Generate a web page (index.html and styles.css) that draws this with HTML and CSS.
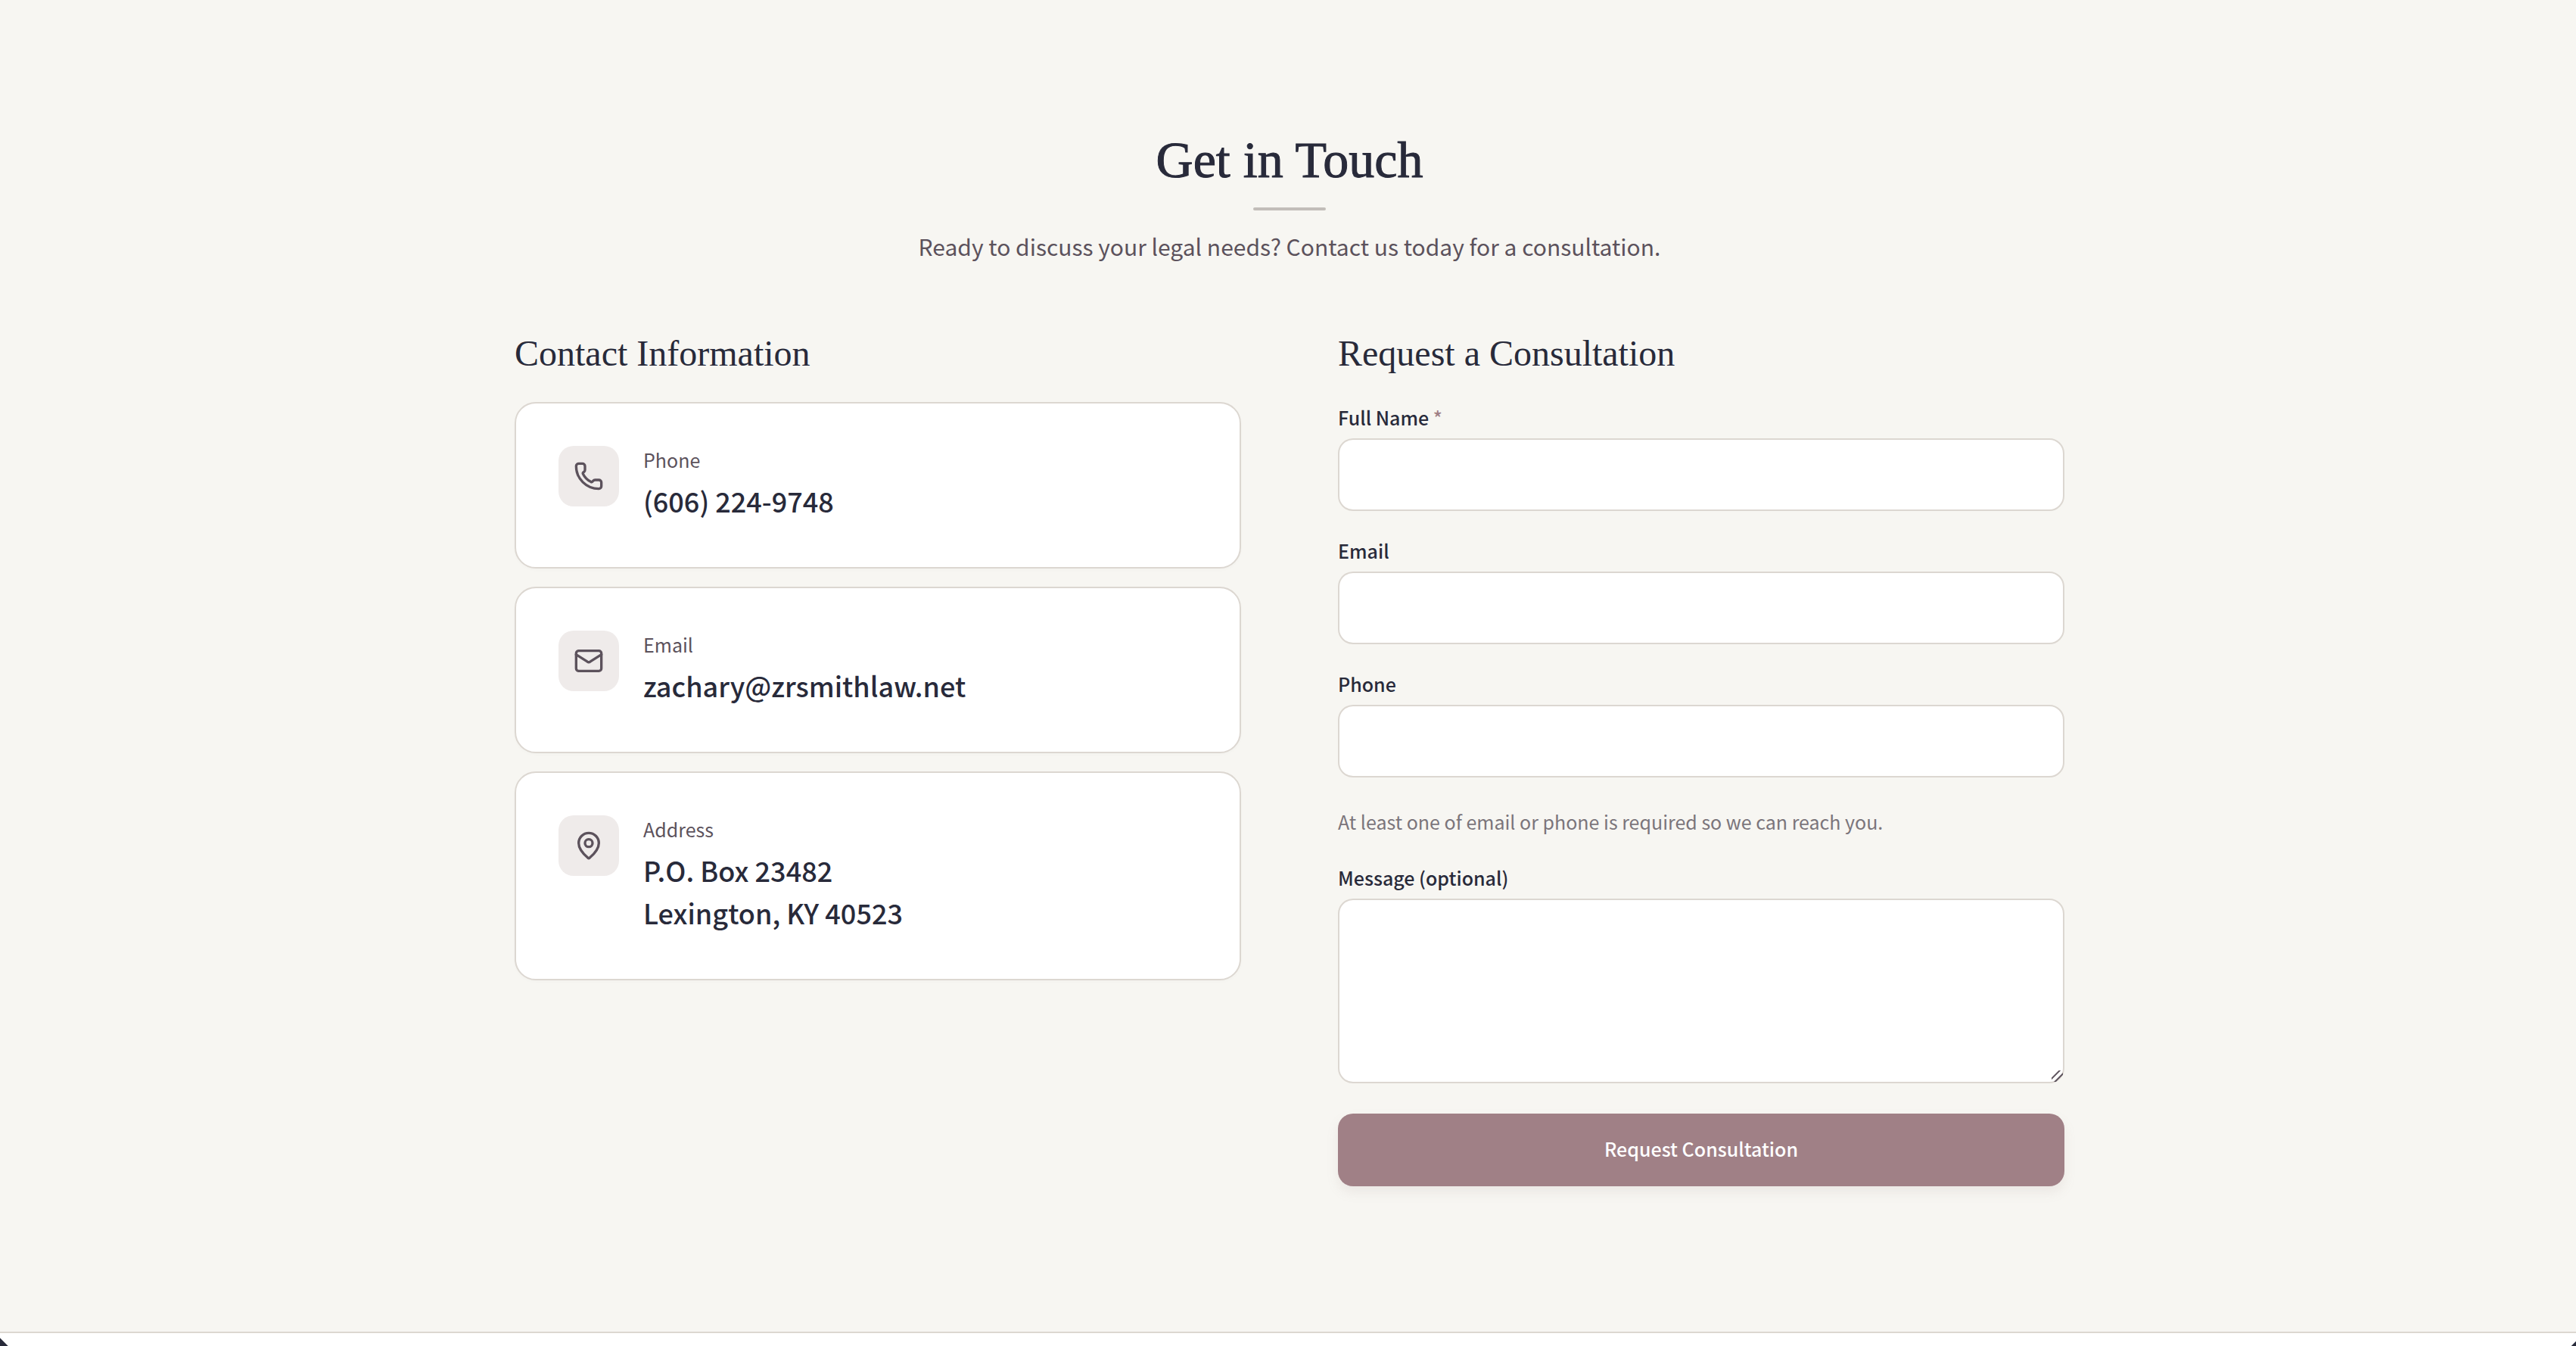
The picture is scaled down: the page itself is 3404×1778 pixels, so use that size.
FILE: index.html
```html
<!DOCTYPE html>
<html lang="en">
<head>
  <meta charset="UTF-8">
  <meta name="viewport" content="width=device-width, initial-scale=1.0">
  <title>Get in Touch</title>
  <link rel="stylesheet" href="styles.css">
</head>
<body>

<main class="contact">
  <header class="section-header">
    <h2>Get in Touch</h2>
    <div class="rule"></div>
    <p>Ready to discuss your legal needs? Contact us today for a consultation.</p>
  </header>

  <div class="columns">
    <section class="info">
      <h3>Contact Information</h3>

      <div class="card">
        <div class="card-icon">
          <svg viewBox="0 0 24 24"><path d="M13.832 16.568a1 1 0 0 0 1.213-.303l.355-.465A2 2 0 0 1 17 15h3a2 2 0 0 1 2 2v3a2 2 0 0 1-2 2A18 18 0 0 1 2 4a2 2 0 0 1 2-2h3a2 2 0 0 1 2 2v3a2 2 0 0 1-.8 1.6l-.468.351a1 1 0 0 0-.292 1.233 14 14 0 0 0 6.392 6.384"/></svg>
        </div>
        <div class="card-text">
          <p class="card-label">Phone</p>
          <a class="card-value" href="tel:6062249748">(606) 224-9748</a>
        </div>
      </div>

      <div class="card">
        <div class="card-icon">
          <svg viewBox="0 0 24 24"><path d="m22 7-8.991 5.727a2 2 0 0 1-2.009 0L2 7"/><rect x="2" y="4" width="20" height="16" rx="2"/></svg>
        </div>
        <div class="card-text">
          <p class="card-label">Email</p>
          <a class="card-value" href="mailto:zachary@zrsmithlaw.net">zachary@zrsmithlaw.net</a>
        </div>
      </div>

      <div class="card">
        <div class="card-icon">
          <svg viewBox="0 0 24 24"><path d="M20 10c0 4.993-5.539 10.193-7.399 11.799a1 1 0 0 1-1.202 0C9.539 20.193 4 14.993 4 10a8 8 0 0 1 16 0"/><circle cx="12" cy="10" r="3"/></svg>
        </div>
        <div class="card-text">
          <p class="card-label">Address</p>
          <p class="card-value">P.O. Box 23482<br>Lexington, KY 40523</p>
        </div>
      </div>
    </section>

    <section class="request">
      <h3>Request a Consultation</h3>

      <form class="form">
        <div class="field">
          <label for="name">Full Name <span class="required">*</span></label>
          <input type="text" id="name" name="name" required>
        </div>
        <div class="field">
          <label for="email">Email</label>
          <input type="email" id="email" name="email">
        </div>
        <div class="field">
          <label for="phone">Phone</label>
          <input type="tel" id="phone" name="phone">
        </div>
        <p class="hint">At least one of email or phone is required so we can reach you.</p>
        <div class="field">
          <label for="message">Message (optional)</label>
          <textarea id="message" name="message"></textarea>
        </div>
        <button type="submit" class="btn-submit">Request Consultation</button>
      </form>
    </section>
  </div>
</main>

<footer class="footer"></footer>

</body>
</html>
```
FILE: styles.css
```css
* {
  box-sizing: border-box;
}

body {
  display: flex;
  flex-direction: column;
  min-height: 100vh;
  margin: 0;
  background: #f7f6f2;
  color: #282a3a;
  font-family: "Noto Sans CJK SC", "Open Sans", sans-serif;
}

h2, h3, p {
  margin: 0;
}

h2, h3 {
  font-family: "Liberation Serif", serif;
  font-weight: 400;
}

.contact {
  padding: 172px 0 192px 4px;
}

/* Heading */
.section-header {
  margin-bottom: 80px;
  text-align: center;
}

.section-header h2 {
  margin-bottom: 24px;
  font-size: 68px;
  line-height: 78px;
  -webkit-text-stroke: 1px #282a3a;
}

.rule {
  width: 96px;
  height: 4px;
  margin: 0 auto 20px;
  border-radius: 2px;
  background: #c2bdb9;
}

.section-header p {
  color: #5c525c;
  font-size: 30px;
  line-height: 55px;
}

.columns {
  display: grid;
  grid-template-columns: 1fr 1fr;
  gap: 128px;
  max-width: 2048px;
  margin: 0 auto;
}

.columns h3 {
  margin-bottom: 6px;
  font-size: 48px;
  line-height: 68px;
}

/* Contact cards */
.info {
  display: flex;
  flex-direction: column;
  gap: 24px;
}

.card {
  display: flex;
  gap: 32px;
  padding: 56px 56px 60px;
  border: 2px solid #dcd7d1;
  border-radius: 28px;
  background: white;
  box-shadow: 0 2px 4px rgba(40, 42, 58, 0.02);
}

.card-icon {
  display: flex;
  align-items: center;
  justify-content: center;
  flex-shrink: 0;
  width: 80px;
  height: 80px;
  border-radius: 20px;
  background: #efebea;
}

.card-icon svg {
  width: 40px;
  height: 40px;
  fill: none;
  stroke: #5c525c;
  stroke-width: 2;
  stroke-linecap: round;
  stroke-linejoin: round;
}

.card-label {
  margin-bottom: 8px;
  color: #5c525c;
  font-size: 25px;
  line-height: 36px;
}

.card-value {
  display: block;
  color: #282a3a;
  font-size: 36px;
  font-weight: 500;
  line-height: 56px;
  text-decoration: none;
}

/* Form */
.form {
  display: flex;
  flex-direction: column;
  gap: 40px;
  padding-top: 32px;
}

.field label {
  display: block;
  margin-bottom: 16px;
  font-size: 25px;
  font-weight: 500;
  line-height: 24px;
}

.required {
  color: #a08086;
}

.field input,
.field textarea {
  display: block;
  width: 100%;
  height: 96px;
  padding: 0 32px;
  border: 2px solid #dcd7d1;
  border-radius: 20px;
  background: white;
  color: #282a3a;
  font: inherit;
  font-size: 28px;
}

.field textarea {
  height: 244px;
  padding: 24px 32px;
  resize: vertical;
}

.field textarea::-webkit-scrollbar {
  width: 20px;
  height: 20px;
}

.field textarea::-webkit-resizer {
  background: linear-gradient(-45deg, transparent 6px, #5c525c 7px 8px, transparent 9px 12px, #5c525c 13px 14px, transparent 15px);
}

.hint {
  margin-bottom: 4px;
  color: #7b757b;
  font-size: 25px;
  line-height: 36px;
}

.btn-submit {
  height: 96px;
  padding: 0 32px 4px;
  border: none;
  border-radius: 20px;
  background: #a08086;
  box-shadow: 0 8px 16px rgba(160, 128, 134, 0.12);
  color: white;
  font: inherit;
  font-size: 25px;
  font-weight: 500;
}

/* Clipped corners at the bottom edge */
.footer {
  flex: 1;
  border-top: 2px solid #dcd7d1;
  background:
    linear-gradient(45deg, #282a3a 7px, transparent 8px) left bottom / 50% 100% no-repeat,
    linear-gradient(-45deg, #282a3a 4px, transparent 5px) right bottom / 50% 100% no-repeat,
    white;
}
```
